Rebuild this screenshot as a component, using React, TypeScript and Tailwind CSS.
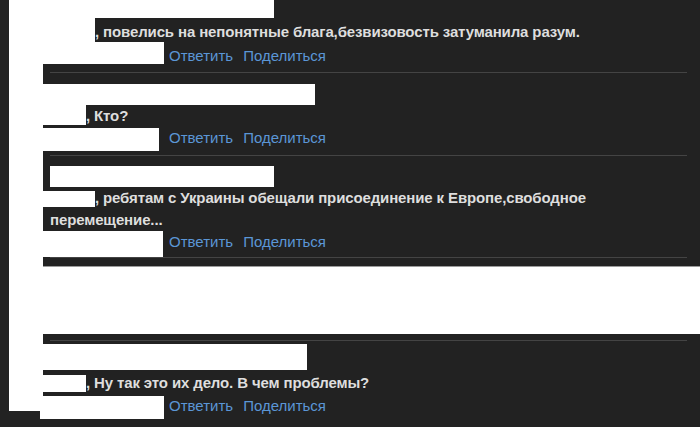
import React from "react";

const font = "font-['Liberation_Sans',Arial,sans-serif]";
const body = "text-[15px] font-bold leading-[22px] tracking-[-0.13px] text-[#dedede]";

function Redact({ className = "" }: { className?: string }) {
  return <span className={`block shrink-0 bg-white ${className}`} />;
}

function Actions({ boxClass }: { boxClass: string }) {
  return (
    <div className="flex items-start">
      <div className="w-[126px] shrink-0">
        <Redact className={boxClass} />
      </div>
      <div className="flex gap-[10px] text-[15px] leading-[22px] text-[#5b96d6]">
        <a href="#">Ответить</a>
        <a href="#">Поделиться</a>
      </div>
    </div>
  );
}

function Separator({ className = "" }: { className?: string }) {
  return <div className={`ml-[7px] mr-[13px] h-px bg-[#444444] ${className}`} />;
}

export default function App() {
  return (
    <div className={`flex h-[427px] w-[700px] overflow-hidden bg-[#222222] pl-[9px] ${font}`}>
      {/* avatar column, redacted */}
      <div className="h-[411px] w-[34px] shrink-0 bg-white" />

      <div className="flex min-w-0 flex-1 flex-col">
        {/* comment 1 (cut off at the top) */}
        <Redact className="h-[18px] w-[231px]" />
        <div className="flex h-[24px] items-start">
          <Redact className="h-[24px] w-[52px]" />
          <p className={`pt-[3px] whitespace-nowrap ${body}`}>
            , повелись на непонятные блага,безвизовость затуманила разум.
          </p>
        </div>
        <div className="flex items-start">
          <Redact className="h-[22px] w-[121px]" />
          <div className="ml-[5px] flex gap-[10px] pt-[3px] text-[15px] leading-[22px] text-[#5b96d6]">
            <a href="#">Ответить</a>
            <a href="#">Поделиться</a>
          </div>
        </div>
        <Separator className="mt-[5px]" />

        {/* comment 2 */}
        <Redact className="mt-[11px] h-[21px] w-[272px]" />
        <div className="flex items-start">
          <Redact className="h-[20px] w-[43px]" />
          <p className={body}>, Кто?</p>
        </div>
        <Actions boxClass="mt-[1px] h-[23px] w-[116px]" />
        <Separator className="mt-[4px]" />

        {/* comment 3 */}
        <Redact className="ml-[7px] mt-[10px] h-[21px] w-[224px]" />
        <p className={`w-[607px] pl-[7px] ${body}`}>
          <span className="-ml-[7px] inline-block h-[16px] w-[52px] bg-white align-middle" />
          , ребятам с Украины обещали присоединение к Европе,свободное перемещение...
        </p>
        <Actions boxClass="h-[26px] w-[120px]" />
        <Separator />

        {/* comment 4, fully redacted */}
        <div className="mt-[8px] h-[68px] border-t border-[#9b9b9b] bg-white" />
        <Separator className="mt-[6px]" />

        {/* comment 5 */}
        <Redact className="mt-[3px] h-[26px] w-[264px]" />
        <div className="mt-[2px] flex items-start">
          <Redact className="mt-[3px] h-[17px] w-[43px]" />
          <p className={body}>, Ну так это их дело. В чем проблемы?</p>
        </div>
        <div className="mt-[1px]">
          <Actions boxClass="-ml-[3px] mt-[1px] h-[23px] w-[124px]" />
        </div>
      </div>
    </div>
  );
}
